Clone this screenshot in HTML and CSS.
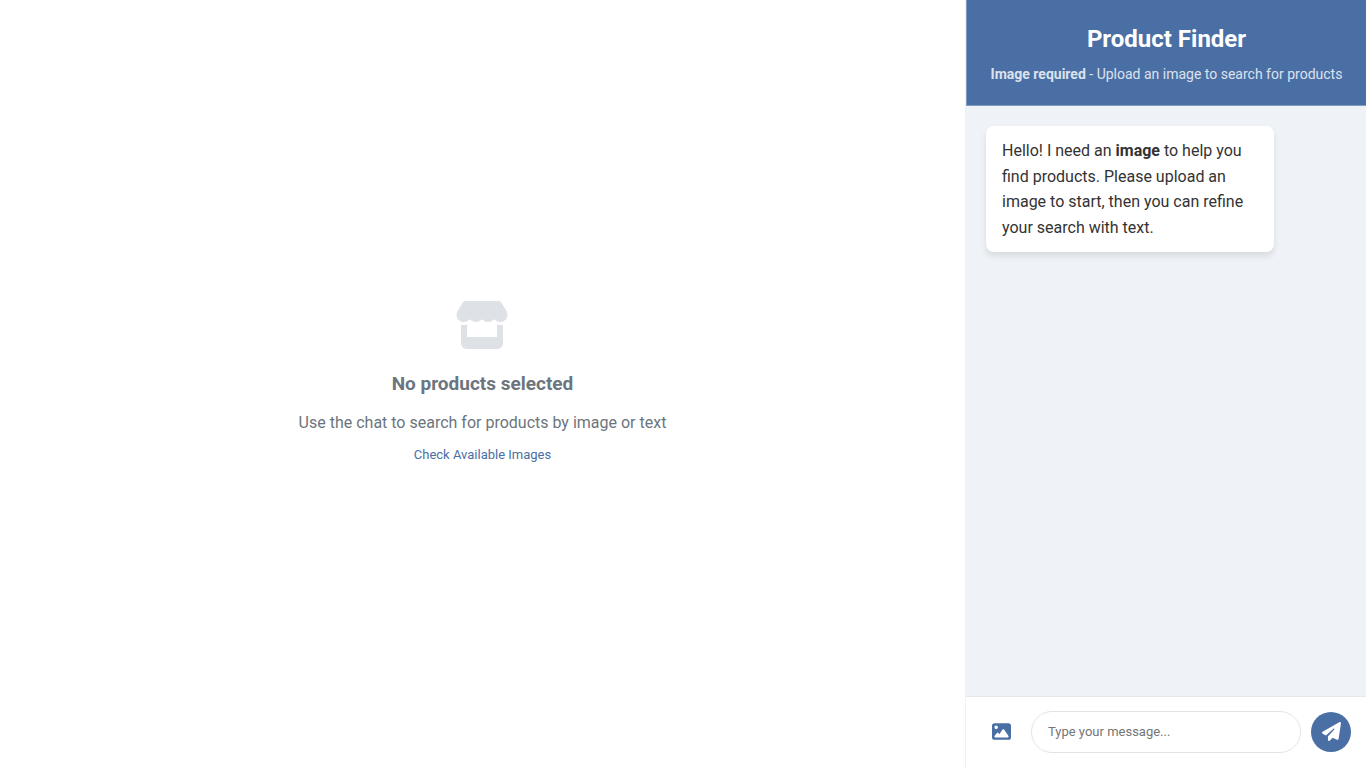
FILE: index.html
```html
<!DOCTYPE html>
<html lang="en">
<head>
  <meta charset="utf-8">
  <meta name="viewport" content="width=device-width, initial-scale=1">
  <title>Product Finder</title>
  <link rel="stylesheet" href="styles.css">
</head>
<body>
  <div class="app">
    <main class="products">
      <section class="empty-state">
        <svg class="empty-icon" viewBox="0 0 576 512" aria-hidden="true"><path d="M547.6 103.8L490.3 13.1C485.2 5 476.1 0 466.4 0H109.6C99.9 0 90.8 5 85.7 13.1L28.3 103.8c-29.6 46.8-3.4 111.9 51.9 119.4c4 .5 8.1 .8 12.1 .8c26.1 0 49.3-11.4 65.2-29c15.9 17.6 39.1 29 65.2 29c26.1 0 49.3-11.4 65.2-29c15.9 17.6 39.1 29 65.2 29c26.2 0 49.3-11.4 65.2-29c16 17.6 39.1 29 65.2 29c4.1 0 8.1-.3 12.1-.8c55.5-7.4 81.8-72.5 52.1-119.4zM499.7 254.9l-.1 0c-5.3 .7-10.7 1.1-16.2 1.1c-12.4 0-24.3-1.9-35.4-5.3V384H128V250.6c-11.2 3.5-23.2 5.4-35.6 5.4c-5.5 0-11-.4-16.3-1.1l-.1 0c-4.1-.6-8.1-1.3-12-2.3V384v64c0 35.3 28.7 64 64 64H448c35.3 0 64-28.7 64-64V384 252.6c-4 1-8 1.8-12.3 2.3z"/></svg>
        <h2 class="empty-title">No products selected</h2>
        <p class="empty-text">Use the chat to search for products by image or text</p>
        <a class="empty-link" href="#images">Check Available Images</a>
      </section>
    </main>
    <aside class="chat">
      <header class="chat-header">
        <h1 class="chat-title">Product Finder</h1>
        <p class="chat-subtitle"><strong>Image required</strong> - Upload an image to search for products</p>
      </header>
      <div class="messages">
        <p class="message">Hello! I need an <strong>image</strong> to help you find products. Please upload an image to start, then you can refine your search with text.</p>
      </div>
      <form class="composer">
        <button class="upload-button" type="button" aria-label="Upload image">
          <svg class="icon" viewBox="0 0 512 512" aria-hidden="true"><path d="M0 96C0 60.7 28.7 32 64 32H448c35.3 0 64 28.7 64 64V416c0 35.3-28.7 64-64 64H64c-35.3 0-64-28.7-64-64V96zM323.8 202.5c-4.5-6.6-11.9-10.5-19.8-10.5s-15.4 3.9-19.8 10.5l-87 127.6L170.7 297c-4.6-5.7-11.5-9-18.7-9s-14.2 3.3-18.7 9l-64 80c-5.8 7.2-6.9 17.1-2.9 25.4s12.4 13.6 21.6 13.6h96 32H424c8.9 0 17.1-4.9 21.2-12.8s3.6-17.4-1.4-24.7l-120-176zM112 192a48 48 0 1 0 0-96 48 48 0 1 0 0 96z"/></svg>
        </button>
        <input class="message-input" type="text" placeholder="Type your message..." aria-label="Message">
        <button class="send-button" type="submit" aria-label="Send message">
          <svg class="icon" viewBox="0 0 512 512" aria-hidden="true"><path d="M498.1 5.6c10.1 7 15.4 19.1 13.5 31.2l-64 416c-1.5 9.7-7.4 18.2-16 23s-18.9 5.4-28 1.6L284 427.7l-68.5 74.1c-8.9 9.7-22.9 12.9-35.2 8.1S160 493.2 160 480V396.4c0-4 1.5-7.8 4.2-10.7L331.8 202.8c5.8-6.3 5.6-16-.4-22s-15.7-6.4-22-.7L106 360.8 17.7 316.6C7.1 311.3 .3 300.7 0 288.9s5.9-22.8 16.1-28.7l448-256c10.7-6.1 23.9-5.5 34 1.4z"/></svg>
        </button>
      </form>
    </aside>
  </div>
</body>
</html>
```
FILE: styles.css
```css
* {
  box-sizing: border-box;
  margin: 0;
  padding: 0;
}

body {
  font-family: Roboto, "Liberation Sans", sans-serif;
  font-size: 16px;
  line-height: 1.6;
  color: #333;
  background: #fff;
}

.app {
  display: flex;
  min-height: 100vh;
}

.products {
  flex: 1;
  display: flex;
  align-items: center;
  justify-content: center;
  padding: 20px 20px 22px;
}

.empty-state {
  display: flex;
  flex-direction: column;
  align-items: center;
  text-align: center;
  color: #6c757d;
}

.empty-icon {
  width: 54px;
  height: 48px;
  margin-bottom: 20px;
  fill: #dee2e6;
}

.empty-title {
  margin-bottom: 11px;
  font-size: 19px;
  line-height: 30px;
}

.empty-text {
  margin-bottom: 9px;
  line-height: 26px;
}

.empty-link {
  font-size: 13px;
  line-height: 20px;
  color: #4a6fa5;
  text-decoration: none;
}

.chat {
  display: flex;
  flex-direction: column;
  width: 401px;
  background: #eff3f8;
  border-left: 1px solid #eff1f3;
}

.chat-header {
  padding: 20px;
  text-align: center;
  color: #fff;
  background: #4a6fa5;
  border: 1px solid #809bc0;
  border-width: 0 0 1px 1px;
}

.chat-title {
  margin-bottom: 5px;
  font-size: 24px;
  line-height: 38px;
}

.chat-subtitle {
  font-size: 14px;
  line-height: 22px;
  opacity: 0.8;
}

.messages {
  flex: 1;
  padding: 20px;
}

.message {
  width: 80%;
  padding: 12px 16px;
  border-radius: 8px;
  background: #fff;
  box-shadow: 0 4px 6px rgba(0, 0, 0, 0.1);
}

.composer {
  display: flex;
  align-items: center;
  gap: 10px;
  padding: 14px 15px 15px;
  background: #fff;
  border-top: 1px solid #e4e8ec;
}

.upload-button,
.send-button {
  display: grid;
  place-items: center;
  flex: none;
  width: 40px;
  height: 40px;
  padding-bottom: 2px;
  border: 0;
  border-radius: 50%;
  cursor: pointer;
}

.upload-button {
  color: #4a6fa5;
  background: transparent;
}

.send-button {
  color: #fff;
  background: #4a6fa5;
}

.icon {
  width: 19px;
  height: 19px;
  fill: currentColor;
}

.message-input {
  flex: 1;
  min-width: 0;
  height: 42px;
  padding: 0 16px 2px;
  font-family: inherit;
  font-size: 13px;
  border: 1px solid #e2e5e8;
  border-radius: 24px;
}

.message-input::placeholder {
  color: #757575;
}
```
